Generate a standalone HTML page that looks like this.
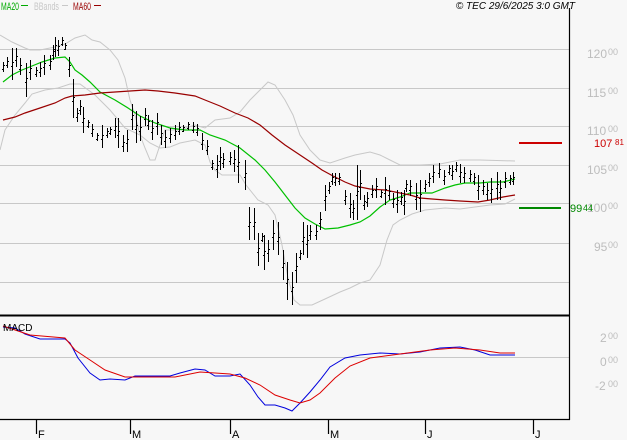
<!DOCTYPE html>
<html><head><meta charset="utf-8"><style>
html,body{margin:0;padding:0;background:#f7f7f7;}
body{width:627px;height:440px;overflow:hidden;position:relative;font-family:"Liberation Sans",sans-serif;}
svg{position:absolute;left:0;top:0;}
.t{font-family:"Liberation Sans",sans-serif;}
</style></head><body>
<svg width="627" height="440" viewBox="0 0 627 440" xmlns="http://www.w3.org/2000/svg">
<rect width="627" height="440" fill="#f7f7f7"/>
<g stroke="#c8c8c8" stroke-width="1" shape-rendering="crispEdges">
<line x1="0" y1="49.5" x2="569" y2="49.5"/>
<line x1="0" y1="88.5" x2="569" y2="88.5"/>
<line x1="0" y1="126.5" x2="569" y2="126.5"/>
<line x1="0" y1="165.5" x2="569" y2="165.5"/>
<line x1="0" y1="203.5" x2="569" y2="203.5"/>
<line x1="0" y1="243.5" x2="569" y2="243.5"/>
<line x1="0" y1="282.5" x2="569" y2="282.5"/>
<line x1="0" y1="357.5" x2="569" y2="357.5"/>
</g>
<g fill="none" stroke="#c8c8c8" stroke-width="1">
<polyline points="0,35 12,42 25,48 30,50 40,50 55,47 65,44 75,38 85,35 92,40 100,42 110,50 118,60 125,78 130,100 135,115 140,135 145,148 150,160 155,160 165,130 180,130 195,125 205,128 215,120 230,118 240,112 250,100 260,90 268,82 275,85 285,100 293,115 300,135 310,150 320,160 330,163 345,158 355,155 370,152 380,155 390,160 400,165 420,165 440,164 460,160 480,160 515,161"/>
<polyline points="0,150 5,130 15,115 25,103 32,94 45,90 58,88 70,84 80,84 95,95 110,110 125,128 140,135 150,143 160,148 170,147 180,143 195,140 205,145 210,162 215,170 222,175 240,175 246,185 258,200 268,205 275,215 282,245 288,278 294,300 300,305 312,305 325,299 340,292 350,288 360,283 370,280 380,265 387,240 393,225 400,220 412,214 425,210 445,208 460,209 475,207 490,205 505,204 515,199"/>
</g>
<polyline fill="none" stroke="#00c000" stroke-width="1.2" points="3,82 12,75 22,70 32,66 42,62 55,58 65,57 70,62 75,70 82,75 90,82 100,92 115,100 128,108 140,116 155,123 170,128 185,130 200,130 210,135 225,140 240,148 255,160 265,170 275,182 285,195 295,208 305,218 315,224 325,229 338,228 350,225 360,222 370,216 380,207 390,200 400,197 410,193 420,193 432,193 445,188 455,185 465,183 480,183 490,182 503,182 515,179"/>
<polyline fill="none" stroke="#990000" stroke-width="1.2" points="3,120 15,117 25,113 40,108 55,103 65,98 72,96 85,95 100,93 115,92 130,91 145,90 158,91 175,93 195,96 205,100 220,106 235,113 248,118 260,125 272,135 285,145 300,155 312,163 322,170 333,176 345,182 355,186 370,189 385,190 400,193 410,195 420,198 432,199 445,200 460,201 478,202 490,200 503,197 515,195"/>
<path id="bars" fill="none" stroke="#000" stroke-width="1.2" shape-rendering="crispEdges" d=""/>
<line x1="0" y1="315.5" x2="569" y2="315.5" stroke="#000" stroke-width="2"/>
<line x1="569.5" y1="8" x2="569.5" y2="420" stroke="#000" stroke-width="1.2"/>
<line x1="0" y1="419.5" x2="570" y2="419.5" stroke="#000" stroke-width="1.2"/>
<polyline fill="none" stroke="#0000dd" stroke-width="1" points="3,327 15,328 25,334 40,339 55,339 65,339 70,343 78,358 90,373 100,380 110,379 125,380 135,376 150,376 170,376 180,373 195,369 205,370 215,376 230,376 240,374 250,385 258,397 265,405 275,405 285,408 292,411 300,403 310,392 320,380 330,367 345,358 360,355 380,353 400,354 420,352 440,348 460,347 475,350 490,355 515,355"/>
<polyline fill="none" stroke="#dd0000" stroke-width="1" points="3,326 30,335 65,338 75,350 90,360 105,370 125,377 175,377 200,372 230,374 245,378 260,385 275,395 290,400 300,403 310,400 320,393 335,378 350,366 370,358 400,354 430,350 455,348 480,350 500,353 515,353"/>
<g stroke="#000" stroke-width="1.2">
<line x1="36.5" y1="419" x2="36.5" y2="434"/><line x1="130.5" y1="419" x2="130.5" y2="434"/>
<line x1="230.5" y1="419" x2="230.5" y2="434"/><line x1="328.5" y1="419" x2="328.5" y2="434"/>
<line x1="425.5" y1="419" x2="425.5" y2="434"/><line x1="533.5" y1="419" x2="533.5" y2="434"/>
</g>
<g class="t" font-size="11" fill="#000">
<text x="38" y="438">F</text><text x="132" y="438">M</text><text x="232" y="438">A</text>
<text x="330" y="438">M</text><text x="427" y="438">J</text><text x="535" y="438">J</text>
<text x="3" y="331" font-size="10">MACD</text>
</g>
<g class="t" fill="#bdbdbd">
<text x="587" y="58" font-size="12">120</text><text x="608" y="55" font-size="9">00</text>
<text x="587" y="97" font-size="12">115</text><text x="608" y="94" font-size="9">00</text>
<text x="587" y="135" font-size="12">110</text><text x="608" y="132" font-size="9">00</text>
<text x="587" y="174" font-size="12">105</text><text x="608" y="171" font-size="9">00</text>
<text x="587" y="212" font-size="12">100</text><text x="608" y="209" font-size="9">00</text>
<text x="594" y="251" font-size="12">95</text><text x="608" y="248" font-size="9">00</text>
<text x="600" y="342" font-size="12">2</text><text x="608" y="339" font-size="9">00</text>
<text x="600" y="366" font-size="12">0</text><text x="608" y="363" font-size="9">00</text>
<text x="595" y="390" font-size="12">-2</text><text x="608" y="387" font-size="9">00</text>
</g>
<line x1="519" y1="143" x2="562" y2="143" stroke="#cc0000" stroke-width="2"/>
<text class="t" x="594" y="147" font-size="11" fill="#cc0000">107</text><text class="t" x="615" y="145" font-size="8" fill="#cc0000">81</text>
<line x1="519" y1="208" x2="561" y2="208" stroke="#008800" stroke-width="2"/>
<text class="t" x="570" y="212" font-size="11" fill="#008800">99</text><text class="t" x="583" y="211" font-size="9" fill="#008800">44</text>
<g class="t" font-size="11">
<text x="1" y="10" fill="#00aa00" textLength="18" lengthAdjust="spacingAndGlyphs">MA20</text><line x1="21" y1="5.5" x2="28" y2="5.5" stroke="#00aa00"/>
<text x="34" y="10" fill="#c8c8c8" textLength="25" lengthAdjust="spacingAndGlyphs">BBands</text><line x1="62" y1="5.5" x2="68" y2="5.5" stroke="#c8c8c8"/>
<text x="73" y="10" fill="#990000" textLength="18" lengthAdjust="spacingAndGlyphs">MA60</text><line x1="94" y1="5.5" x2="101" y2="5.5" stroke="#990000"/>
<text x="575" y="9" fill="#000" font-size="10" font-style="italic" text-anchor="end">© TEC 29/6/2025 3:0 GMT</text>
</g>
</svg>
<script>
var b=[[3,62,72],[7,57,68],[12,48,80],[16,48,67],[20,58,75],[26,63,97],[30,60,80],[36,67,77],[40,62,77],[44,55,75],[50,55,70],[53,45,60],[55,37,57],[58,40,56],[62,37,46],[65,43,50],[69,57,77],[73,79,118],[77,108,122],[80,100,115],[83,107,133],[88,120,128],[92,124,137],[97,133,141],[102,125,148],[107,128,138],[110,127,135],[115,118,138],[118,118,148],[123,135,152],[127,130,152],[132,104,130],[136,111,143],[140,116,141],[145,108,126],[148,115,130],[152,120,140],[157,113,135],[161,125,145],[165,130,148],[170,128,143],[175,125,140],[179,122,135],[183,125,132],[188,122,130],[193,122,133],[197,124,136],[202,133,150],[207,140,155],[212,160,170],[217,155,178],[220,147,170],[223,153,168],[230,152,165],[234,150,172],[238,145,183],[245,160,190],[249,207,240],[254,208,240],[258,233,266],[262,233,242],[264,235,270],[268,240,262],[273,220,250],[278,222,255],[283,250,280],[287,262,300],[292,272,305],[296,253,283],[300,250,260],[303,222,255],[307,225,258],[310,225,240],[316,225,240],[320,212,230],[325,185,211],[329,182,194],[332,173,185],[335,173,186],[339,173,185],[345,190,205],[350,193,218],[353,200,220],[357,165,220],[360,170,200],[364,195,210],[367,192,207],[372,185,198],[376,178,198],[381,190,198],[385,177,205],[389,185,200],[393,193,208],[397,190,213],[401,192,205],[404,190,215],[406,180,192],[410,180,196],[416,183,210],[420,180,212],[425,180,192],[429,173,187],[433,165,183],[439,163,178],[444,170,185],[449,165,175],[452,165,180],[456,162,172],[460,164,183],[464,167,183],[470,170,182],[474,173,185],[478,175,200],[483,180,195],[487,183,200],[491,178,203],[497,172,200],[500,180,200],[505,172,188],[510,175,185],[513,172,185]];
var d="";b.forEach(function(a){var x=a[0]+.5,m=Math.round((a[1]+a[2])/2)+.5;d+="M"+x+","+a[1]+"V"+a[2]+"M"+(x-1.5)+","+(m+2)+"H"+x+"M"+x+","+(m-2)+"H"+(x+1.5);});
document.getElementById("bars").setAttribute("d",d);
</script>
</body></html>
